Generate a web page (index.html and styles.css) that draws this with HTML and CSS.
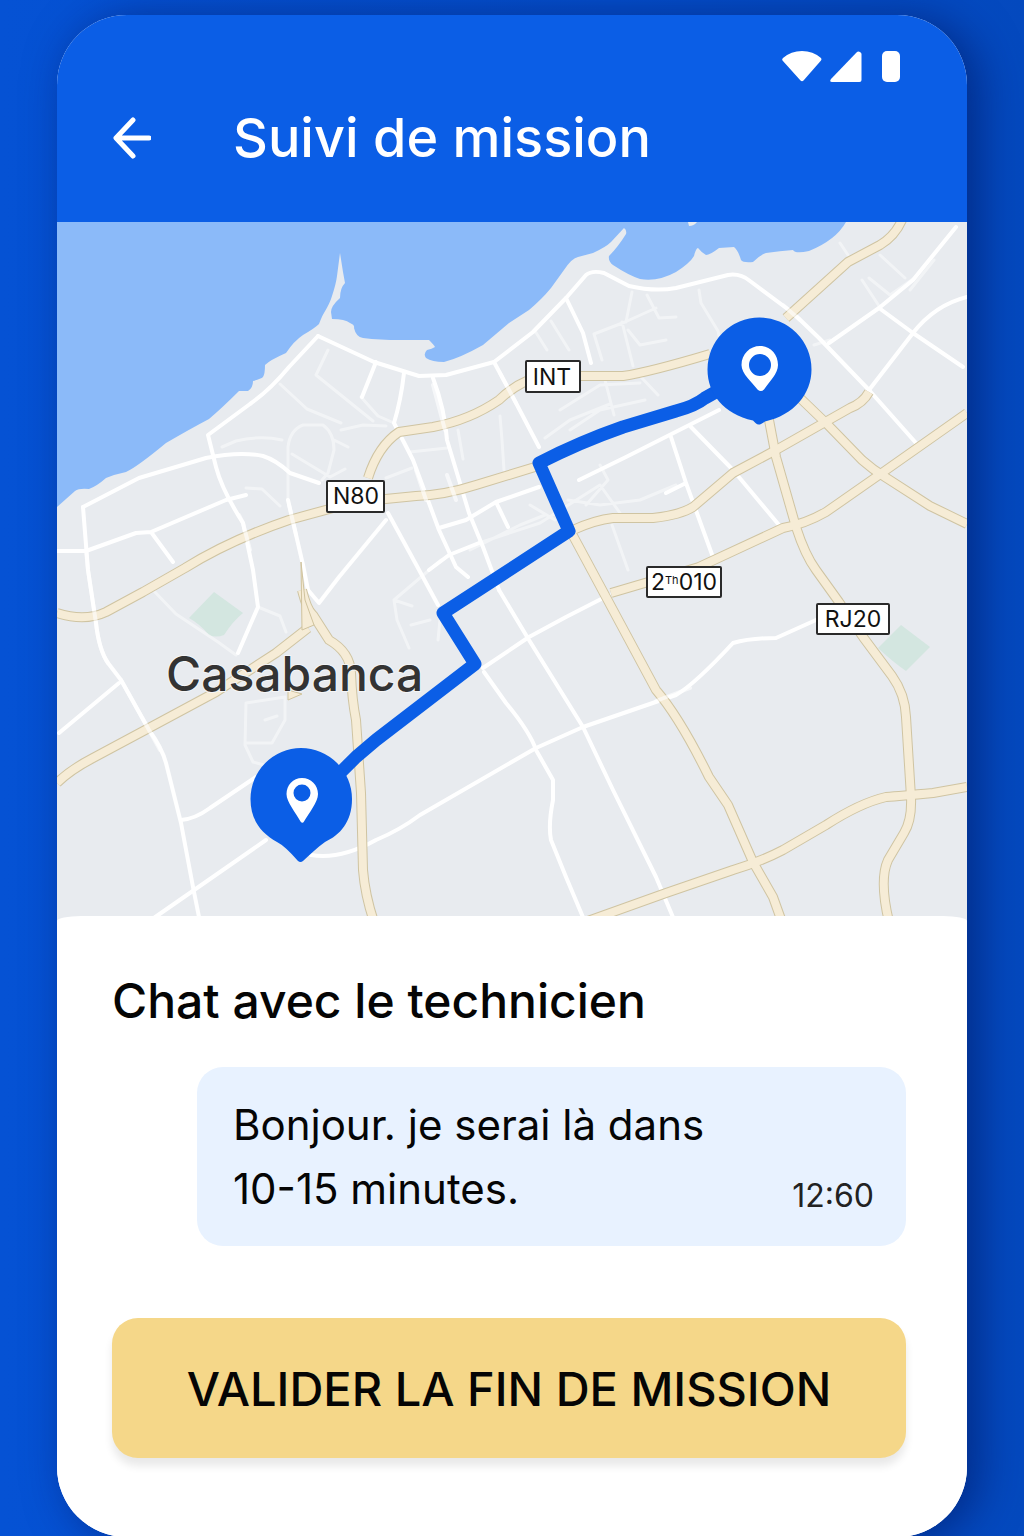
FILE: index.html
```html
<!DOCTYPE html>
<html lang="fr">
<head>
<meta charset="utf-8">
<meta name="viewport" content="width=device-width, initial-scale=1">
<title>Suivi de mission</title>
<link rel="stylesheet" href="styles.css">
</head>
<body>
<main class="phone">
  <header class="header">
    <div class="status">
      <svg width="120" height="32" viewBox="781 50 120 32" fill="#fff" aria-hidden="true">
        <path d="M782.500 60.500Q781.500 59 783 58Q791 51 802 51Q813 51 821 58Q822 59 821 60.500L803.500 80.500Q802 82 800.500 80.500Z"/>
        <path d="M831 79L856.500 52.500Q858 51 860 52Q861.500 53 861.500 54V80Q861.500 82 859.500 82H832Q829 82 831 79Z"/>
        <rect x="882" y="51" width="18" height="31" rx="5"/>
      </svg>
    </div>
    <div class="bar">
      <button class="back" type="button" aria-label="Retour">
        <svg width="40" height="44" viewBox="0 0 40 44" fill="none" stroke="#fff" stroke-width="5" stroke-linejoin="round" stroke-linecap="round" aria-hidden="true"><path d="M22 4L5 22L22 40M6 22H38"/></svg>
      </button>
      <h1 class="title">Suivi de mission</h1>
    </div>
  </header>

  <section class="map" aria-label="Carte">
    <svg class="map-svg" viewBox="57 222 910 700" role="img" aria-label="Itinéraire à Casabanca">
      <rect class="land" x="57" y="222" width="910" height="700"/>
      <path class="sea" d="M57 222V507L75 491Q79 488 89 489Q97 486 106 478Q116 474 126 472Q137 467 166 443Q190 429 209 419Q222 408 239 391H248Q253 388 253 381Q261 379 263 377Q265 374 265 365Q270 360 286 353Q294 341 303 335Q315 328 319 324Q322 316 324 313Q330 303 332 296Q336 284 337 276L340 253L343 272L345 283Q340 288 340 298Q331 306 331 312L332 319Q345 319 350 323Q355 325 354 328Q356 337 363 338Q380 340 400 340L429 340Q434 345 435 347Q432 349 427 350Q423 354 426 358Q432 362 444 362Q460 358 483 345L509 323L529 310Q542 299 551 288L564 270Q572 258 578 257L593 253Q606 247 611 242L624 228Q627 230 626 234Q618 247 609 256Q608 261 613 265Q628 275 640 279Q658 282 676 272Q690 263 694 256Q696 248 698 248Q702 253 706 255Q710 255 719 248L734 247Q738 250 741 260Q743 263 753 262Q760 255 766 253Q780 251 793 250Q795 254 809 251Q836 240 846 222Z"/>
      <path class="land" d="M688 222L697 222Q694 226 689 226Z"/>
      <path class="park" d="M214 592L243 613Q233 621 224 635Q216 638 209 635Q200 624 189 618Z"/>
      <path class="park" d="M901 625L930 647L906 671Q893 662 878 648Z"/>

      <g class="lane faint">
        <path d="M288 500V447Q290 430 303 425H323Q334 433 334 450L328 473L322 480M292 454L330 477L345 469M334 440L348 447M222 447L236 441Q260 435 282 440M246 488L262 489L280 506M328 350L316 375L373 421M280 384L307 409L341 423M361 397L378 416L394 423M341 430L363 425L386 426M535 331L547 350M551 321L569 350M594 334L625 322L656 308M622 322L633 366M594 334L602 360M632 292L626 322M647 295L659 318L676 317M699 290L701 303L718 331L724 360M628 330L640 345L666 340M605 380L614 415M640 376L658 395M545 438L570 420L610 404M560 410L600 385L640 383M570 430L600 410L645 400M500 416L502 440L504 470M458 430L463 459M410 452L447 448M386 478L412 468M479 543L540 523L600 485L620 513M470 550L520 525L545 515M568 500L600 505L640 500L676 485M530 505L555 520M612 525L628 570M394 600L441 560M394 600L397 620L409 648M394 600L412 606M411 625L430 620M440 620L438 640M246 703L245 745L253 762L264 765M246 703L285 697V720L272 743H246M265 720L277 716M258 607L280 616L286 632M153 590L176 614L218 642L236 655M869 278L890 295L913 279M880 255L905 278M934 260L910 290M840 243L848 255M862 280L881 309M830 340L814 345M600 465L608 480L586 505"/>
      </g>
      <g class="lane">
        <path d="M83 507L88 570L96 623Q99 650 108 663L121 680L149 730Q162 748 166 763L181 823L193 887L200 922"/>
        <path d="M83 507L139 478L206 458Q240 451 263 456Q276 460 290 473L319 483"/>
        <path d="M318 336L374 362L419 376L446 375L494 362L533 332L566 298L586 275Q592 270 604 273L629 286Q655 292 676 288L728 275Q740 273 750 281L793 313L819 338L869 390L916 443"/>
        <path d="M318 336L289 367Q270 390 250 404L208 435L216 467Q222 490 243 523L253 570L258 607L238 653"/>
        <path d="M57 551H86L136 533L151 532L226 500L246 495M151 532L173 562"/>
        <path d="M288 500Q296 535 303 565L308 590L319 603L339 577L386 520M388 513L418 568L438 605"/>
        <path d="M376 362L362 397M404 373Q401 400 394 423L413 460L439 530L456 567L468 577M433 378Q445 410 447 440L469 513L483 547L499 590M494 362L516 403L539 447M566 298L583 333L591 363"/>
        <path d="M439 528L466 520L496 502L539 487M496 502L508 527M429 570L449 555L479 543"/>
        <path d="M499 590L529 640L583 727L613 790L656 877L675 922M483 668L529 637L566 617L609 595M484 672L506 703Q530 732 536 750L553 780V800Q548 825 551 840L566 877L585 922"/>
        <path d="M311 855Q340 860 376 840Q400 830 420 815L536 748L583 727L676 695Q695 684 733 643Q750 638 776 638L816 620"/>
        <path d="M151 920L266 840M181 820Q195 819 210 808L256 777M59 733L119 683"/>
        <path d="M579 480L626 457L719 410M671 437L686 483L714 560M666 493L686 483M691 427L733 470L779 525"/>
        <path d="M829 343L879 308L913 280L956 227M869 390L913 333Q935 305 967 297M879 308L913 333L963 367"/>
      </g>
      <g class="road-edge">
        <path id="r1" d="M57 613Q85 622 106 612L143 592L185 568Q230 540 289 520L355 502L416 496Q445 495 476 485L535 467"/>
        <path id="r2" d="M368 478Q378 446 399 432L433 427Q470 420 499 400Q520 380 543 376L623 376Q650 372 710 354"/>
        <path id="r3" d="M902 220Q895 236 880 245L848 262L786 318"/>
        <path id="r4" d="M800 398L826 423L862 460Q872 469 885 477L930 506L967 524"/>
        <path id="r5" d="M967 413L879 475L826 512Q805 524 783 528L699 567L611 593"/>
        <path id="r6" d="M869 392Q863 403 850 408L776 450L733 473L693 507Q680 515 653 518H613Q595 520 573 530"/>
        <path id="r7" d="M769 420L776 457L796 527Q805 555 816 570L839 602L863 637L892 676Q905 694 906 717L911 797Q912 820 904 833L888 860Q879 880 889 922"/>
        <path id="r8" d="M967 787L933 793Q900 796 886 797Q860 803 826 825L783 850Q760 862 733 870L666 893L585 922"/>
        <path id="r9" d="M571 532L606 597L656 690Q680 718 709 777L728 805L753 862L773 897L782 922"/>
        <path id="r10" d="M57 783Q70 770 93 758L149 728L216 692L276 653L308 628"/>
        <path id="r11" d="M302 590Q307 610 313 615L329 640Q350 652 351 673Q352 700 356 720L361 793L363 870Q365 895 374 922"/>
      </g>
      <g class="road">
        <use href="#r1"/><use href="#r2"/><use href="#r3"/><use href="#r4"/><use href="#r5"/><use href="#r6"/><use href="#r7"/><use href="#r8"/><use href="#r9"/><use href="#r10"/><use href="#r11"/>
      </g>
      <path class="lane over" d="M86 550L88 570L96 623Q99 650 108 663M121 680L149 730L160 750M239 515L243 523L250 550M289 505L296 535M447 475L456 500M416 470L426 500M433 385L445 430M500 373L516 403M783 305L800 320M656 701L690 688"/>
      <path class="spur" d="M301 562L305 600L314 625L302 630Z"/>
      <path class="spur" d="M288 700V690L302 694Z"/>

      <path class="route" d="M338 775L356 757L376 740L475 664L443 613L569 531L539 463Q580 442 623 427L676 411Q695 406 705 398L730 384"/>

      <g class="pin">
        <path d="M759.500 317.500A52 52 0 0 1 811.500 369.500C811.500 394 794 415 765 421.500L761 424Q758 425.500 755.500 423L753 420.500C724 414 707.500 394 707.500 369.500A52 52 0 0 1 759.500 317.500Z"/>
        <path class="pin-mark" fill-rule="evenodd" d="M760 346C770 346 778 354 778 365C778 374 769 382 764 389.500Q761 392.500 757.500 389.500C752 382 741.500 374 741.500 365C741.500 354 750 346 760 346ZM760 354A11 11 0 1 0 760 376A11 11 0 1 0 760 354Z"/>
      </g>
      <g class="pin">
        <path d="M301 748A51 51 0 0 1 352 799C352 822 340 835 325 842Q319 846 303 861Q300.500 863 298 861Q285 846 277 842C261 833 250.500 820 250.500 799A50.500 51 0 0 1 301 748Z"/>
        <path class="pin-mark" fill-rule="evenodd" d="M302 778C311 778 318 785 318 794C318 802 309 813 304 821.500Q302.500 824 300.500 821.500C296 813 286.500 802 286.500 794C286.500 785 293 778 302 778ZM302 784.500A8.500 8.500 0 1 0 302 801.500A8.500 8.500 0 1 0 302 784.500Z"/>
      </g>

      <g class="shield">
        <rect x="526" y="361" width="54" height="31" rx="1"/>
        <rect x="327" y="481" width="57" height="31" rx="1"/>
        <rect x="647" y="567" width="74" height="30" rx="1"/>
        <rect x="817" y="604" width="72" height="30" rx="1"/>
      </g>
      <g class="shield-text">
        <text x="552" y="385">INT</text>
        <text x="356" y="504">N80</text>
        <text x="684" y="590">2<tspan class="sup" dy="-6">Th</tspan><tspan dy="6">010</tspan></text>
        <text x="853" y="627">RJ20</text>
      </g>
      <text class="city" x="166" y="691">Casabanca</text>
    </svg>
  </section>

  <section class="sheet">
    <h2 class="heading">Chat avec le technicien</h2>
    <div class="bubble">
      <p class="message">Bonjour. je serai là dans 10-15 minutes.</p>
      <time class="time">12:60</time>
    </div>
    <button class="cta" type="button">VALIDER LA FIN DE MISSION</button>
  </section>
</main>
</body>
</html>
```
FILE: styles.css
```css
* { box-sizing: border-box; }

body {
  margin: 0;
  padding: 15px 57px 0;
  background: linear-gradient(90deg, #0552d4, #044ecb 60%, #0449be);
  font-family: Inter, "Liberation Sans", sans-serif;
  color: #050505;
}

h1, h2, p { margin: 0; font-weight: 500; }

button {
  border: 0;
  padding: 0;
  font: inherit;
  color: inherit;
  cursor: pointer;
}

.phone {
  overflow: hidden;
  border-radius: 70px;
  background: #fff;
  box-shadow: 12px 4px 44px rgba(2, 24, 96, 0.6);
}

.header {
  padding: 35px 66px 52px 54px;
  background: #0b5ee6;
  color: #fff;
}

.status { display: flex; justify-content: flex-end; }
.status svg { display: block; }

.bar {
  display: flex;
  align-items: center;
  gap: 82px;
  margin-top: 24px;
}

.back { background: none; }
.back svg { display: block; }

.title { font-size: 54px; line-height: 64px; }

.map-svg { display: block; width: 100%; }

.land { fill: #e8ebef; }
.sea { fill: #8bbaf9; }
.park { fill: #d3e6e0; }

.lane {
  fill: none;
  stroke: #fff;
  stroke-width: 4;
  stroke-linejoin: round;
  stroke-linecap: round;
}
.lane.faint { stroke-width: 3; opacity: 0.45; }
.lane.over { opacity: 0.6; }

.road-edge, .road { fill: none; stroke-linejoin: round; }
.road-edge { stroke: #cfc4a2; stroke-width: 10; }
.road { stroke: #f6ecd6; stroke-width: 8; }
.spur { fill: #f6ecd6; stroke: #d0c39d; }

.route {
  fill: none;
  stroke: #0b5ee6;
  stroke-width: 13;
  stroke-linejoin: round;
}

.pin { fill: #0b5ee6; }
.pin-mark { fill: #fff; }

.shield { fill: #fff; stroke: #2a2a2a; stroke-width: 2; }
.shield-text {
  fill: #111;
  font-size: 23px;
  text-anchor: middle;
}
.sup { font-size: 11px; }

.city {
  fill: #333;
  stroke: #f4f5f6;
  stroke-width: 2;
  paint-order: stroke;
  font-size: 48px;
  font-weight: 500;
}

.sheet {
  position: relative;
  display: flex;
  flex-direction: column;
  margin-top: -6px;
  padding: 57px 61px 79px 55px;
  border-radius: 24px 24px 0 0 / 5px 5px 0 0;
  background: #fff;
}

.heading { font-size: 48px; line-height: 56px; }

.bubble {
  display: flex;
  align-items: flex-end;
  justify-content: space-between;
  margin: 38px 0 0 85px;
  padding: 26px 32px 25px 36px;
  border-radius: 26px;
  background: #e8f2ff;
}

.message {
  flex: 0 1 500px;
  font-size: 42px;
  font-weight: 400;
  line-height: 64px;
}

.time { color: #222; font-size: 32px; line-height: 50px; }

.cta {
  margin-top: 72px;
  height: 140px;
  border-radius: 26px;
  background: #f5d789;
  box-shadow: 0 8px 8px rgba(0, 0, 0, 0.09);
  color: #050505;
  font-size: 47px;
  font-weight: 500;
}
```
